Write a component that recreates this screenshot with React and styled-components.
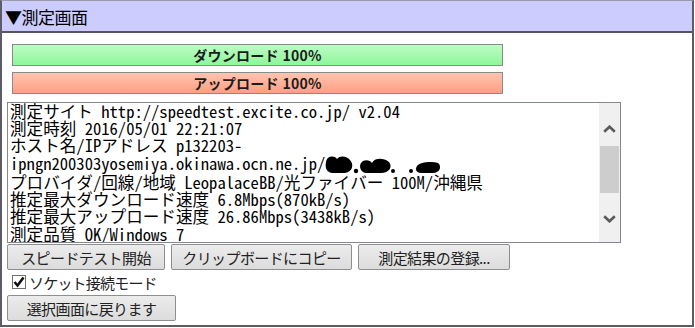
import React from "react";
import styled, { createGlobalStyle } from "styled-components";

const GlobalStyle = createGlobalStyle`
  html, body { margin: 0; padding: 0; background: #fff; }
  body { font-family: "Noto Sans CJK JP", "Liberation Sans", sans-serif; }
`;

const Frame = styled.div`
  width: 694px;
  height: 327px;
  box-sizing: border-box;
  border: 2px solid #5c5c66;
  border-top: 1px solid #9a9aa8;
  display: flex;
  flex-direction: column;
`;

const Header = styled.div`
  height: 30px;
  background: #ccccff;
  border-bottom: 2px solid #55555e;
  display: flex;
  align-items: center;
  padding-left: 3px;
  font-size: 17px;
  color: #000;
  letter-spacing: -0.5px;
`;

const Body = styled.div`
  padding: 11px 0 0 5px;
  display: flex;
  flex-direction: column;
`;

const Bars = styled.div`
  display: flex;
  flex-direction: column;
  gap: 6px;
  margin-left: 5px;
  margin-bottom: 8px;
`;

const Bar = styled.div`
  width: 491px;
  height: 22px;
  box-sizing: border-box;
  border: 1px solid #8a8a8a;
  background: ${(p) =>
    p.$kind === "up"
      ? "linear-gradient(#ffc4b0, #ff9e84)"
      : "linear-gradient(#bdfcc4, #8ef69b)"};
  display: flex;
  align-items: center;
  justify-content: center;
  font-size: 14px;
  font-weight: bold;
  color: #1c1c1c;
  letter-spacing: 0.3px;
`;

const Log = styled.div`
  width: 614px;
  height: 141px;
  box-sizing: border-box;
  border: 1px solid #828790;
  display: flex;
  background: #fff;
`;

const LogText = styled.div`
  flex: 1;
  padding: 0 0 0 2px;
  font-family: "Noto Sans Mono CJK JP", "Liberation Mono", "Noto Sans CJK JP", monospace;
  font-size: 16.6px;
  line-height: 17.1px;
  color: #000;
  white-space: pre;
  overflow: hidden;
`;

const Scrollbar = styled.div`
  width: 21px;
  background: #f0f0f0;
  display: flex;
  flex-direction: column;
  align-items: center;
`;

const Arrow = styled.div`
  height: 43px;
  box-sizing: border-box;
  display: flex;
  justify-content: center;
  align-items: ${(p) => (p.$down ? "flex-start" : "flex-end")};
  padding: ${(p) => (p.$down ? "16px 0 0" : "0 0 13px")};
`;

const Thumb = styled.div`
  width: 19px;
  height: 47px;
  background: #cdcdcd;
`;

const Track = styled.div`
  flex: 1;
`;

const ButtonRow = styled.div`
  display: flex;
  gap: 6px;
  margin-top: 1px;
`;

const Button = styled.button`
  width: ${(p) => p.$w}px;
  height: 26px;
  box-sizing: border-box;
  border: 1px solid #8e8e8e;
  border-radius: 2px;
  background: linear-gradient(#ececec, #dcdcdc);
  font-family: "Noto Sans CJK JP", sans-serif;
  font-size: 15px;
  color: #222;
  padding: 0;
  display: flex;
  align-items: center;
  justify-content: center;
  letter-spacing: -0.6px;
`;

const CheckRow = styled.label`
  display: flex;
  align-items: center;
  height: 24px;
  margin-left: 5px;
  gap: 3px;
  font-size: 15px;
  color: #222;
  letter-spacing: -0.8px;
`;

const Box = styled.span`
  width: 14px;
  height: 14px;
  box-sizing: border-box;
  border: 1px solid #707070;
  background: #fff;
  display: flex;
  align-items: center;
  justify-content: center;
`;

const Redacted = styled.svg`
  vertical-align: -4px;
`;

const Chevron = ({ down }) => (
  <svg width="13" height="8" viewBox="0 0 13 8">
    <path
      d={down ? "M1.2 1.2 L6.5 6.3 L11.8 1.2" : "M1.2 6.8 L6.5 1.7 L11.8 6.8"}
      fill="none"
      stroke="#5a5a5a"
      strokeWidth="2.6"
    />
  </svg>
);

const lines = [
  "測定サイト http://speedtest.excite.co.jp/ v2.04",
  "測定時刻 2016/05/01 22:21:07",
  "ホスト名/IPアドレス p132203-",
];

export default function App() {
  return (
    <>
      <GlobalStyle />
      <Frame>
        <Header>▼測定画面</Header>
        <Body>
          <Bars>
            <Bar>ダウンロード 100%</Bar>
            <Bar $kind="up">アップロード 100%</Bar>
          </Bars>
          <Log>
            <LogText>
              {lines.join("\n")}
              {"\nipngn200303yosemiya.okinawa.ocn.ne.jp/"}
              <Redacted width="118" height="20" viewBox="0 0 118 20">
                <path d="M1 8 C2 2 9 1 12 5 C15 1 22 2 25 6 C29 10 28 18 20 19 L7 19 C1 18 0 13 1 8 Z" fill="#000" />
                <circle cx="31" cy="17" r="2.2" fill="#000" />
                <path d="M36 9 C39 5 45 6 47 9 C49 4 58 3 64 8 C68 13 64 19 56 19 L41 19 C35 18 34 12 36 9 Z" fill="#000" />
                <circle cx="68" cy="17" r="2" fill="#000" />
                <circle cx="86" cy="17" r="2" fill="#000" />
                <path d="M92 12 C95 8 106 7 113 9 C117 12 115 19 108 19 L96 19 C91 19 90 15 92 12 Z" fill="#000" />
              </Redacted>
              {"\nプロバイダ/回線/地域 LeopalaceBB/光ファイバー 100M/沖縄県"}
              {"\n推定最大ダウンロード速度 6.8Mbps(870kB/s)"}
              {"\n推定最大アップロード速度 26.86Mbps(3438kB/s)"}
              {"\n測定品質 OK/Windows 7"}
            </LogText>
            <Scrollbar>
              <Arrow><Chevron /></Arrow>
              <Thumb />
              <Track />
              <Arrow $down><Chevron down /></Arrow>
            </Scrollbar>
          </Log>
          <ButtonRow>
            <Button $w={158}>スピードテスト開始</Button>
            <Button $w={181}>クリップボードにコピー</Button>
            <Button $w={152}>測定結果の登録...</Button>
          </ButtonRow>
          <CheckRow>
            <Box>
              <svg width="12" height="12" viewBox="0 0 12 12">
                <path d="M1.5 6 L4.5 9.5 L10.5 1.5" fill="none" stroke="#111" strokeWidth="2.6" />
              </svg>
            </Box>
            ソケット接続モード
          </CheckRow>
          <ButtonRow>
            <Button $w={169}>選択画面に戻ります</Button>
          </ButtonRow>
        </Body>
      </Frame>
    </>
  );
}
